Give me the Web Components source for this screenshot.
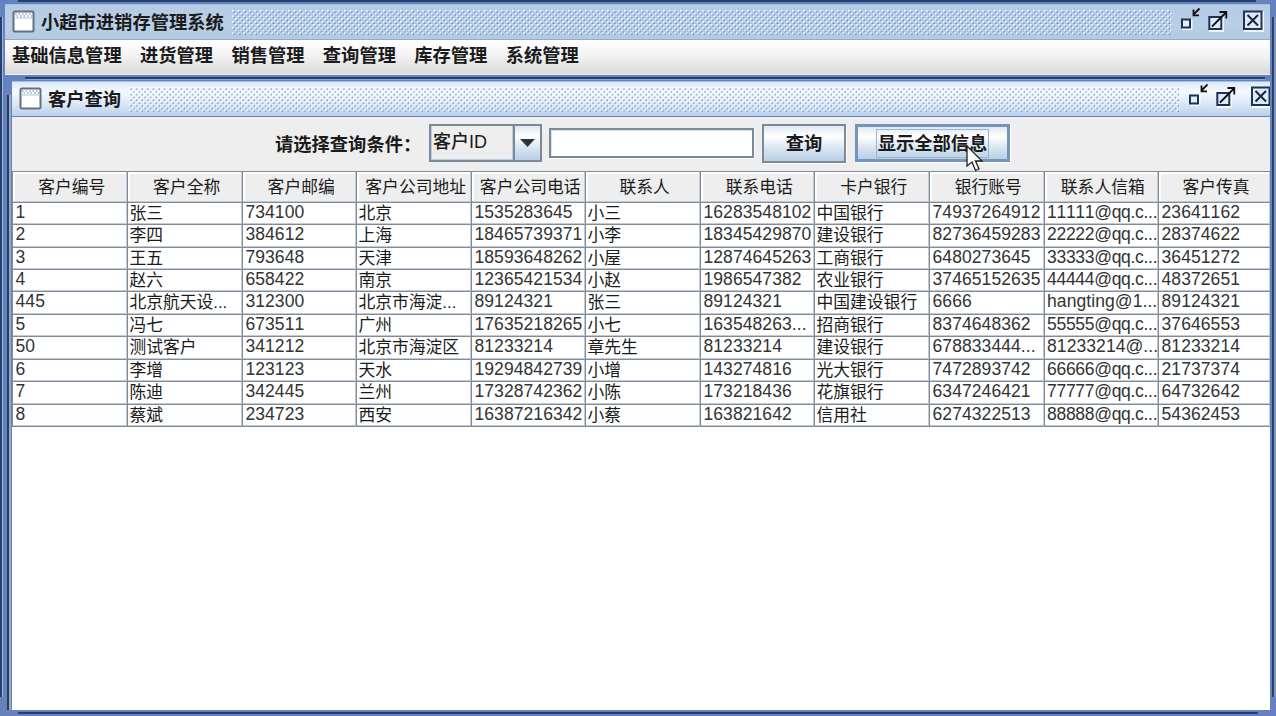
<!DOCTYPE html>
<html lang="zh-CN">
<head>
<meta charset="utf-8">
<title>小超市进销存管理系统</title>
<style>
html, body { margin: 0; height: 100%; overflow: hidden; }
body {
  background: #6382bf;
  color: #1b1b1b;
  font-family: "Liberation Sans", "Noto Sans CJK SC", sans-serif;
}
</style>
</head>
<body>
<desktop-window></desktop-window>

<script>
// small helper, every element gets an open root with its own markup
function define(name, html, setup) {
  const template = document.createElement('template');
  template.innerHTML = html;
  customElements.define(name, class extends HTMLElement {
    constructor() {
      super();
      const shadow = this.attachShadow({ mode: 'open' });
      shadow.appendChild(template.content.cloneNode(true));
      if (setup) setup(this, shadow);
    }
  });
}

// title bar with icon, bumps and the three window buttons
define('title-bar', `
<style>
:host {
  display: flex;
  align-items: center;
  box-sizing: border-box;
  height: 36px;
  padding-left: 7px;
  overflow: hidden;
  background: var(--bar, #b8cfe5);
  border-top: 1px solid #a5bfe0;
  border-bottom: 1px solid var(--line, #8fabd0);
}
svg { display: block; flex: none; }
.title {
  font-size: 18.3px;
  font-weight: bold;
  line-height: 32px;
  white-space: nowrap;
  padding-top: 2px;
  margin: 0 8px 0 6px;
}
.bumps { flex: 1; width: 0; height: 25px; }
.buttons { width: var(--buttons, 91px); margin-left: 7px; }
.buttons g { transform: translateY(var(--lift, 0)); }
</style>
<svg width="23" height="24" viewBox="0 0 23 24">
  <rect x="1.5" y="1.5" width="20" height="20" rx="1.5" fill="#fff" stroke="#637183" stroke-width="2"/>
  <path d="M3 4H21" stroke="#93a9c4" stroke-width="1.5" stroke-dasharray="1.5 2"/>
  <path d="M4.5 6H20" stroke="#93a9c4" stroke-width="1.3" stroke-dasharray="1.5 2"/>
  <path d="M2 8H21" stroke="#b4c0cf" stroke-width="1"/>
</svg>
<span class="title"><slot></slot></span>
<svg class="bumps">
  <defs>
    <pattern id="dots" width="5.6" height="5.6" patternUnits="userSpaceOnUse">
      <g fill="var(--dot-light, #fff)"><rect width="1.6" height="1.6"/><rect x="2.8" y="2.8" width="1.6" height="1.6"/></g>
      <g fill="var(--dot, #5c86c6)"><rect x="1.4" y="1.4" width="1.4" height="1.4"/><rect x="4.2" y="4.2" width="1.4" height="1.4"/></g>
    </pattern>
  </defs>
  <rect width="100%" height="25" fill="url(#dots)"/>
</svg>
<svg class="buttons" height="34" fill="none">
  <g>
    <path d="M4 15.5H12.5V24H4ZM31 13H44V26H31ZM66 7.5H84V26H66Z" stroke="#fff" stroke-width="2" opacity=".8"/>
    <path d="M3 14.5H11V22.5H3Z" fill="#e4eefb" stroke="#1c3258" stroke-width="2"/>
    <path d="M20.5 3.5L14.5 9.5M14.5 4.5V10.3H20" stroke="#111" stroke-width="1.8"/>
    <path d="M30.3 12H42.3V24H30.3Z" fill="#dce9f8" stroke="#1c3258" stroke-width="2"/>
    <path d="M33 21.5L47 7.5M40.5 7H47.3V13.5" stroke="#111" stroke-width="1.8"/>
    <path d="M65 6.5H82.5V24H65Z" fill="#dce9f8" stroke="#1c3258" stroke-width="2"/>
    <path d="M68.5 10L79 20.5M79 10L68.5 20.5" stroke="#1b2638" stroke-width="2"/>
  </g>
</svg>
`);

define('menu-bar', `
<style>
:host {
  display: flex;
  gap: 18.3px;
  box-sizing: border-box;
  height: 35px;
  padding-left: 7px;
  background: linear-gradient(#fff, #f3f3f3 45%, #dadada);
  border-bottom: 1px solid #eef0f3;
  font-size: 18.3px;
  font-weight: bold;
  line-height: 32px;
  white-space: nowrap;
}
</style>
<slot></slot>
`);

define('push-button', `
<style>
:host {
  display: flex;
  align-items: center;
  justify-content: center;
  box-sizing: border-box;
  height: 39px;
  border: 2px solid #7a8a99;
  background: linear-gradient(#dde8f3, #fff 30%, #dce8f3 60%, #b8cfe5);
  box-shadow: 1px 1px #fff;
  font-size: 18.3px;
  font-weight: bold;
}
:host([focused]) { border: 3px solid #7595b8; height: 38px; }
span { line-height: 26px; padding: 1px 1px 0; border: 1px solid transparent; white-space: nowrap; }
:host([focused]) span { border-color: #9cb3cf; }
</style>
<span><slot></slot></span>
`);

define('combo-box', `
<style>
:host {
  display: flex;
  box-sizing: border-box;
  width: 113px;
  height: 38px;
  border: 2px solid #7a8a99;
  font-size: 18px;
  font-weight: 500;
}
.value { flex: 1; padding-left: 1px; line-height: 33px; border: 1px solid #b8cfe5; border-top: 0; white-space: nowrap; }
.arrow {
  width: 25px;
  display: flex;
  align-items: center;
  justify-content: center;
  border-left: 2px solid #7a8a99;
  background: linear-gradient(#dde8f3, #fff 30%, #dce8f3 60%, #b8cfe5);
}
</style>
<div class="value"><slot></slot></div>
<div class="arrow"><svg width="15" height="8"><path d="M0 0H15L7.5 8Z" fill="#303336"/></svg></div>
`);

define('text-box', `
<style>
:host {
  display: block;
  box-sizing: border-box;
  width: 205px;
  height: 30px;
  background: #fff;
  border: 2px solid #7a8a99;
  box-shadow: 1px 1px #fff, inset 1px 1px #dfe5ec;
}
</style>
`);

define('search-panel', `
<style>
:host {
  display: flex;
  align-items: center;
  box-sizing: border-box;
  height: 54px;
  padding: 0 0 2px 263px;
  background: #eee;
}
.label { width: 154px; font-size: 18.3px; font-weight: bold; line-height: 30px; padding-top: 3px; white-space: nowrap; }
text-box { margin: 0 8px 0 7px; }
.find { width: 84px; margin-right: 9px; }
.all { width: 155px; }
</style>
<span class="label">请选择查询条件：</span>
<combo-box>客户ID</combo-box>
<text-box></text-box>
<push-button class="find">查询</push-button>
<push-button class="all" focused>显示全部信息</push-button>
`);

const columns = ['客户编号', '客户全称', '客户邮编', '客户公司地址', '客户公司电话', '联系人', '联系电话', '卡户银行', '银行账号', '联系人信箱', '客户传真'];
const customers = [
  ['1', '张三', '734100', '北京', '1535283645', '小三', '16283548102', '中国银行', '74937264912', '11111@qq.c...', '23641162'],
  ['2', '李四', '384612', '上海', '18465739371', '小李', '18345429870', '建设银行', '82736459283', '22222@qq.c...', '28374622'],
  ['3', '王五', '793648', '天津', '18593648262', '小屋', '12874645263', '工商银行', '6480273645', '33333@qq.c...', '36451272'],
  ['4', '赵六', '658422', '南京', '12365421534', '小赵', '1986547382', '农业银行', '37465152635', '44444@qq.c...', '48372651'],
  ['445', '北京航天设...', '312300', '北京市海淀...', '89124321', '张三', '89124321', '中国建设银行', '6666', 'hangting@1...', '89124321'],
  ['5', '冯七', '673511', '广州', '17635218265', '小七', '163548263...', '招商银行', '8374648362', '55555@qq.c...', '37646553'],
  ['50', '测试客户', '341212', '北京市海淀区', '81233214', '章先生', '81233214', '建设银行', '678833444...', '81233214@...', '81233214'],
  ['6', '李增', '123123', '天水', '19294842739', '小增', '143274816', '光大银行', '7472893742', '66666@qq.c...', '21737374'],
  ['7', '陈迪', '342445', '兰州', '17328742362', '小陈', '173218436', '花旗银行', '6347246421', '77777@qq.c...', '64732642'],
  ['8', '蔡斌', '234723', '西安', '16387216342', '小蔡', '163821642', '信用社', '6274322513', '88888@qq.c...', '54362453'],
];

define('data-table', `
<style>
:host { display: block; flex: 1; background: #fff; overflow: hidden; }
.grid {
  display: grid;
  grid-template-columns: 116.4px repeat(9, 114.52px) 1fr;
  grid-template-rows: 31.6px repeat(10, 22.47px);
  font-size: 17.5px;
  font-kerning: none;
}
.grid div {
  box-sizing: border-box;
  border-right: 1px solid #7f8c9b;
  border-bottom: 1px solid #7f8c9b;
  box-shadow: inset -1px -1px #c3cad2;
  padding-left: 2.5px;
  line-height: 19px;
  color: #333;
  letter-spacing: .08px;
  overflow: hidden;
  white-space: nowrap;
}
.grid .cut { letter-spacing: -.3px; }
.grid .cjk { font-size: 16.8px; padding-left: 1px; line-height: 21.5px; color: #1b1b1b; letter-spacing: 0; }
.grid .head {
  background: #eee;
  border-top: 1px solid #7f8c9b;
  box-shadow: inset -1px -1px #c3cad2, inset 2px 2px #fff;
  padding-left: 3px;
  text-align: center;
  line-height: 32px;
}
.grid div:nth-child(11n) { border-right: 0; }
.grid div:nth-child(11n+1) { border-left: 1px solid #7f8c9b; }
</style>
<div class="grid"></div>
`, (host, shadow) => {
  const grid = shadow.querySelector('.grid');
  const add = (text, cls) => {
    const cell = document.createElement('div');
    cell.className = cls;
    cell.textContent = text;
    grid.appendChild(cell);
  };
  columns.forEach(text => add(text, 'cjk head'));
  customers.flat().forEach(text => {
    if (/[\u4e00-\u9fff]/.test(text)) add(text, 'cjk');
    else add(text, text.endsWith('c...') ? 'cut' : '');
  });
});

// the customer query window inside of the main one
define('query-window', `
<style>
:host { display: flex; flex-direction: column; flex: 1; min-width: 0; min-height: 0; }
title-bar {
  --bar: linear-gradient(#dce8f8, #f5f9ff 28%, #e3edfa 55%, #bad0ec);
  --line: #6585b8;
  --dot: #6d8fbd;
  --buttons: 83px;
  --lift: -1px;
}
</style>
<title-bar>客户查询</title-bar>
<search-panel></search-panel>
<data-table></data-table>
`);

define('desktop-window', `
<style>
:host {
  display: flex;
  flex-direction: column;
  box-sizing: border-box;
  position: relative;
  width: 1276px;
  height: 716px;
  padding: 4px 6px 6px 5px;
  background: #6382bf;
}
title-bar.main { --bar: linear-gradient(#b5cbe5, #b8cfe5 60%, #b3c9df); }
.inner { display: flex; flex: 1; min-height: 0; padding: 6px 0 0 7px; }
.edge { position: absolute; background: #26406c; }
.top { left: 18px; right: 20px; top: 0; height: 2px; }
.bottom { left: 18px; right: 18px; bottom: 2px; height: 2px; }
.mid { left: 25px; right: 11px; top: 77px; height: 2px; box-shadow: 0 1px #89a6d6; }
.left { left: 0; top: 17px; bottom: 19px; width: 2px; box-shadow: 1px 0 #9fb9e2; }
.left2 { left: 7px; top: 95px; bottom: 6px; width: 2px; background: #2d3d50; box-shadow: 2px 0 #91a9cf; }
.right { right: 2px; top: 17px; bottom: 19px; width: 2px; box-shadow: 2px 0 #8395b0; }
.cursor { position: absolute; left: 965px; top: 144px; }
</style>
<title-bar class="main">小超市进销存管理系统</title-bar>
<menu-bar>
  <span>基础信息管理</span>
  <span>进货管理</span>
  <span>销售管理</span>
  <span>查询管理</span>
  <span>库存管理</span>
  <span>系统管理</span>
</menu-bar>
<div class="inner"><query-window></query-window></div>
<div class="edge top"></div>
<div class="edge bottom"></div>
<div class="edge mid"></div>
<div class="edge left"></div>
<div class="edge left2"></div>
<div class="edge right"></div>
<svg class="cursor" width="20" height="30" viewBox="0 0 20 30">
  <path d="M2 2V22L7 18L10.5 26.5L14 25L10.5 17H17Z" fill="#fff" stroke="#202020" stroke-width="1.3"/>
</svg>
`);
</script>
</body>
</html>
